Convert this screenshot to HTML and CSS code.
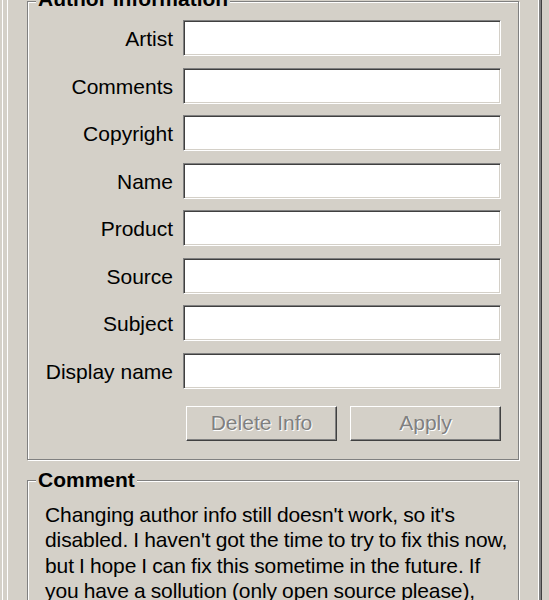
FILE: index.html
```html
<!DOCTYPE html>
<html>
<head>
<meta charset="utf-8">
<link rel="stylesheet" href="styles.css">
</head>
<body>
<div class="outer">
  <div class="inner">
    <div class="group author">
      <div class="legend">Author Information</div>
      <div class="form">
        <label class="lbl">Artist</label><div class="field"></div>
        <label class="lbl">Comments</label><div class="field"></div>
        <label class="lbl">Copyright</label><div class="field"></div>
        <label class="lbl">Name</label><div class="field"></div>
        <label class="lbl">Product</label><div class="field"></div>
        <label class="lbl">Source</label><div class="field"></div>
        <label class="lbl">Subject</label><div class="field"></div>
        <label class="lbl">Display name</label><div class="field"></div>
      </div>
      <div class="buttons">
        <div class="btn">Delete Info</div>
        <div class="btn">Apply</div>
      </div>
    </div>
    <div class="group comment">
      <div class="legend">Comment</div>
      <p class="text">Changing author info still doesn't work, so it's<br>disabled. I haven't got the time to try to fix this now,<br>but I hope I can fix this sometime in the future. If<br>you have a sollution (only open source please),</p>
    </div>
  </div>
</div>
</body>
</html>
```
FILE: styles.css
```css
html, body {
  margin: 0;
  padding: 0;
  background: #d4d0c8;
  overflow: hidden;
}
body {
  font-family: "Liberation Sans", Arial, sans-serif;
  font-size: 21px;
  color: #000;
  height: 600px;
}
.outer {
  box-sizing: border-box;
  margin-left: 2px;
  width: 540px;
  height: 600px;
  border-left: 1px solid #fff;
  border-right: 1px solid #404040;
  box-shadow: inset -1px 0 0 #808080;
}
.inner {
  box-sizing: border-box;
  margin-left: 4px;
  width: 533px;
  height: 600px;
  border-left: 1px solid #fff;
  border-right: 1px solid #808080;
  box-shadow: inset -1px 0 0 #fff;
  padding-left: 19px;
  padding-top: 1px;
}
.group {
  box-sizing: border-box;
  width: 492px;
  border: 1px solid #808080;
  box-shadow: inset 1px 1px 0 #fff, 1px 1px 0 #fff;
}
.author {
  height: 459px;
}
.comment {
  margin-top: 20px;
  height: 130px;
}
.legend {
  display: table;
  margin: -13px 0 0 8px;
  padding: 0 2px;
  background: #d4d0c8;
  font-weight: bold;
  line-height: 24px;
}
.author .legend {
  margin-top: -15px;
}
.form {
  display: grid;
  grid-template-columns: 145px 318px;
  grid-auto-rows: 36px;
  column-gap: 10px;
  row-gap: 11.5px;
  margin-top: 9px;
}
.lbl {
  text-align: right;
  line-height: 38px;
}
.field {
  box-sizing: border-box;
  background: #fff;
  border-style: solid;
  border-width: 1px;
  border-color: #808080 #fff #fff #808080;
  box-shadow: inset 1px 1px 0 #404040, inset -1px -1px 0 #d4d0c8;
}
.buttons {
  display: flex;
  gap: 13px;
  margin: 17.5px 0 0 158px;
}
.btn {
  box-sizing: border-box;
  width: 151px;
  height: 35px;
  border-style: solid;
  border-width: 1px;
  border-color: #fff #404040 #404040 #fff;
  box-shadow: inset -1px -1px 0 #808080;
  color: #808080;
  text-shadow: 1px 1px 0 #fff;
  text-align: center;
  line-height: 32px;
}
.text {
  margin: 10px 0 0 17px;
  line-height: 25.3px;
  white-space: nowrap;
  letter-spacing: -0.1px;
  word-spacing: -0.6px;
}
```
